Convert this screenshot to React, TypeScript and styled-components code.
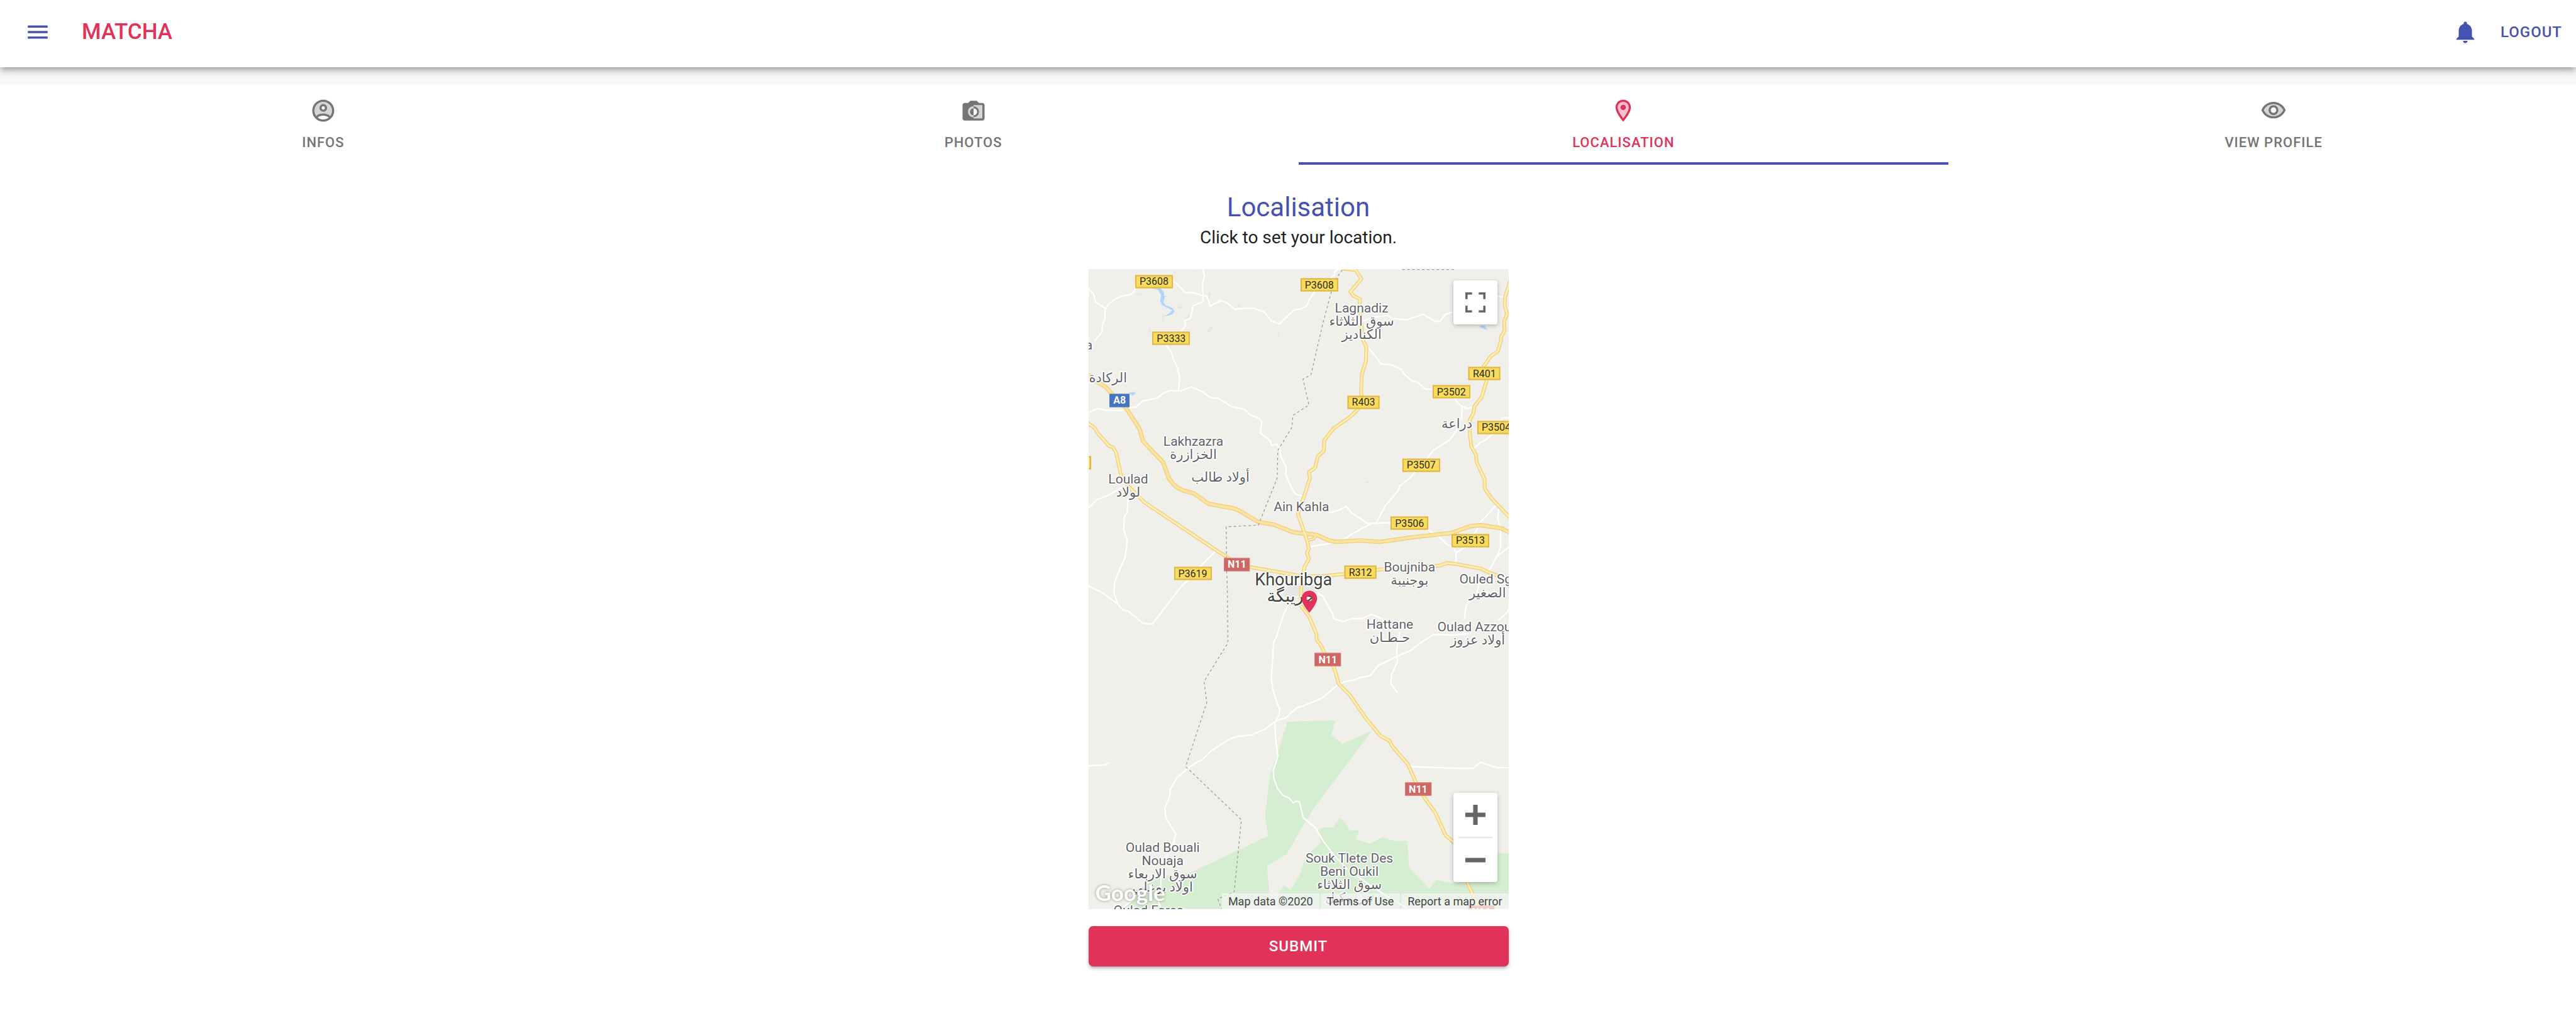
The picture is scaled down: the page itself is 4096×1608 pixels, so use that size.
import React from "react";
import styled, { createGlobalStyle } from "styled-components";
import { MdMenu, MdNotifications, MdPlace } from "react-icons/md";

const color = {
  primary: "#4552b1",
  secondary: "#e1325a",
  muted: "#757575",
  text: "#222222",
  page: "#f8f8f8",
  paper: "#ffffff",
};

const GlobalStyle = createGlobalStyle`
  *, *::before, *::after { box-sizing: border-box; }
  body {
    margin: 0;
    background: ${color.page};
    color: ${color.text};
    font-family: Roboto, "Noto Sans", "DejaVu Sans", sans-serif;
  }
  button { font-family: inherit; cursor: pointer; }
`;

const Page = styled.div`
  display: flex;
  flex-direction: column;
  min-height: 100vh;
  overflow-x: clip;
`;

const AppBar = styled.header`
  display: flex;
  align-items: flex-start;
  height: 107px;
  padding: 0 22px 0 39px;
  background: ${color.paper};
  box-shadow: 0 4px 7px -2px rgba(0, 0, 0, 0.2), 0 7px 9px rgba(0, 0, 0, 0.14),
    0 2px 18px rgba(0, 0, 0, 0.12);
`;

const BarButton = styled.button`
  display: flex;
  align-items: center;
  height: 101px;
  padding: 0;
  border: 0;
  background: none;
  color: ${color.primary};
  font-size: 24px;
  font-weight: 500;
  letter-spacing: 1px;
  text-transform: uppercase;
`;

const Brand = styled.h1`
  flex: 1;
  margin: 0 0 0 49px;
  color: ${color.secondary};
  font-size: 35px;
  font-weight: 500;
  line-height: 101px;
`;

const BarActions = styled.div`
  display: flex;
  gap: 35px;
`;

const Main = styled.main`
  flex: 1;
  margin: 28px -36px 0 -3px;
  background: ${color.paper};
  position: relative;
`;

const Tabs = styled.nav`
  display: flex;
`;

const Tab = styled.button<{ $active?: boolean }>`
  flex: 1;
  display: flex;
  flex-direction: column;
  align-items: center;
  gap: 16px;
  height: 127px;
  padding: 20px 0 0;
  border: 0;
  border-bottom: 4px solid ${(p) => (p.$active ? color.primary : "transparent")};
  background: none;
  color: ${(p) => (p.$active ? color.secondary : color.muted)};
  font-size: 22px;
  font-weight: 500;
  line-height: 28px;
  letter-spacing: 1px;
  text-transform: uppercase;
`;

const TabIcon = styled.svg`
  width: 42px;
  height: 42px;
  fill: currentColor;
`;

const Panel = styled.section`
  display: flex;
  flex-direction: column;
  align-items: center;
  padding: 43px 0 48px;
`;

const Title = styled.h2`
  margin: 0;
  color: ${color.primary};
  font-size: 42px;
  font-weight: 400;
  line-height: 50px;
`;

const Hint = styled.p`
  margin: 0;
  font-size: 28px;
  line-height: 46px;
`;

const MapFrame = styled.div`
  position: relative;
  width: 100%;
  max-width: 668px;
  aspect-ratio: 684 / 1042;
  margin: 27px 0;
  overflow: hidden;
  background: #f0efea;
`;

const MapDrawing = styled.svg`
  display: block;
  width: 100%;
  height: 100%;
`;

const Place = styled.div<{ $big?: boolean }>`
  position: absolute;
  transform: translateX(-50%);
  margin-top: ${(p) => (p.$big ? "-14px" : "-10px")};
  color: ${(p) => (p.$big ? "#424242" : "#5f6368")};
  font-size: ${(p) => (p.$big ? "27px" : "21px")};
  line-height: ${(p) => (p.$big ? "26px" : "21px")};
  text-align: center;
  white-space: pre;
  text-shadow: 2px 0 1px #fff, -2px 0 1px #fff, 0 2px 1px #fff, 0 -2px 1px #fff,
    1px 1px 1px #fff, -1px -1px 1px #fff, 1px -1px 1px #fff, -1px 1px 1px #fff;
`;

const shieldLook = {
  road: "border: 2px solid #dcb649; background: #fadb5a; color: #2b2b20; font-weight: 400;",
  national: "border: 1px solid #d58078; background: #cb6765; color: #fff; font-weight: 700;",
  motorway: "border: 1px solid #4c7ecb; background: #4674bf; color: #fff; font-weight: 700;",
};

const Shield = styled.span<{ $kind: keyof typeof shieldLook }>`
  position: absolute;
  display: flex;
  align-items: center;
  height: 21px;
  padding: 0 5px;
  transform: translate(-50%, -50%);
  font-size: 16px;
  line-height: 16px;
  ${(p) => shieldLook[p.$kind]}
`;

const Marker = styled(MdPlace)`
  position: absolute;
  width: 42px;
  height: 42px;
  transform: translateX(-50%);
  color: ${color.secondary};
`;

const MapControls = styled.div<{ $edge: "top" | "bottom" }>`
  position: absolute;
  right: 18px;
  ${(p) => (p.$edge === "top" ? "top: 18px;" : "bottom: 43px;")}
  display: flex;
  flex-direction: column;
  align-items: center;
  width: 70px;
  border-radius: 4px;
  background: #fff;
  box-shadow: 0 2px 7px rgba(0, 0, 0, 0.25);
`;

const MapButton = styled.button`
  display: flex;
  align-items: center;
  justify-content: center;
  width: 70px;
  height: 70px;
  padding: 0;
  border: 0;
  background: none;
`;

const ControlIcon = styled.svg`
  width: 32px;
  height: 32px;
  fill: #666;
`;

const ControlRule = styled.div`
  width: 54px;
  height: 2px;
  background: #e6e6e6;
`;

const GoogleMark = styled.span`
  position: absolute;
  left: 11px;
  bottom: 7px;
  color: #fff;
  font-family: Lato, "Open Sans", sans-serif;
  font-size: 35px;
  font-weight: 700;
  line-height: 40px;
  text-shadow: 0 0 4px rgba(0, 0, 0, 0.4);
`;

const Legal = styled.div`
  position: absolute;
  right: 0;
  bottom: 0;
  display: flex;
  gap: 2px;
  font-size: 18px;
  line-height: 25px;
`;

const LegalItem = styled.span`
  padding: 0 10px;
  background: rgba(245, 245, 245, 0.72);
  color: #444;
`;

const LegalLink = styled.a`
  padding: 0 10px;
  background: rgba(245, 245, 245, 0.72);
  color: #444;
  text-decoration: none;
`;

const Submit = styled.button`
  width: 100%;
  max-width: 668px;
  height: 64px;
  border: 0;
  border-radius: 7px;
  background: ${color.secondary};
  color: #fff;
  font-size: 24px;
  font-weight: 500;
  letter-spacing: 1px;
  text-transform: uppercase;
  box-shadow: 0 5px 2px -4px rgba(0, 0, 0, 0.2), 0 4px 4px rgba(0, 0, 0, 0.14),
    0 2px 9px rgba(0, 0, 0, 0.12);
`;

/* ---- map geometry ---- */

const MAP_W = 684;
const MAP_H = 1042;

const sheets = {
  nw: { x: -12, y: -8, sx: 3, sy: 3 },
  ne: { x: 338, y: -8, sx: 3, sy: 3 },
  sw: { x: -12, y: 502, sx: 3, sy: 2.45 },
  se: { x: 338, y: 502, sx: 3, sy: 2.45 },
  centre: { x: 238, y: 452, sx: 3, sy: 3 },
};

// "nw 10,20 30,40 se 5,6" -> SVG points in map units
const trace = (line: string): string => {
  let sheet = sheets.nw;
  const out: string[] = [];
  line.split(" ").forEach((token) => {
    if (token in sheets) {
      sheet = sheets[token as keyof typeof sheets];
      return;
    }
    const [px, py] = token.split(",").map(Number);
    out.push(`${(sheet.x + px / sheet.sx).toFixed(1)},${(sheet.y + py / sheet.sy).toFixed(1)}`);
  });
  return out.join(" ");
};

const parks = [
  "sw 1008,576 se 190,571 172,628 225,665 370,612 85,922 0,1037 sw 1005,1103 907,1153 918,1260 920,1322 200,1322 290,1240 400,1190 480,1190 540,1175 730,1103 913,1032 898,950 922,790 960,700",
  "sw 955,1322 960,1262 992,1228 1022,1250 1068,1185 se 45,1115 120,1058 105,1010 135,997 180,997 213,960 240,980 262,1010 308,1010 290,1045 360,1063 420,1037 480,1052 543,1052 550,1155 650,1243 685,1207 770,1222 800,1100 1040,1100 1040,1322",
  "se 735,1040 770,1075 770,1050",
];

const hills = [
  "nw 260,155 298,135 290,148",
  "nw 465,205 500,208 485,220",
  "nw 630,305 652,302 625,335 610,335",
  "nw 395,240 408,250 398,288",
  "nw 325,320 338,310 335,345",
  "nw 445,45 465,24 460,45",
  "nw 535,40 565,24 550,40",
  "nw 620,145 635,140 622,180",
  "nw 755,205 778,190 775,208",
  "nw 955,350 970,322 965,350",
  "nw 505,265 530,245 525,265",
  "ne 335,1070 345,1060 370,1075 350,1068",
  "centre 235,215 270,190 420,185 430,210 370,230 290,240 260,258 240,240",
];

const waters = [
  "nw 340,115 385,115 403,135 405,155 420,157 408,160 402,185 410,200 440,212 457,228 445,245 408,255 430,240 445,225 420,212 395,200 385,180 390,150 375,125",
  "nw 232,628 265,625 265,632 250,643",
  "ne 892,300 918,300 935,320 905,312",
];

const lanes = [
  "nw 36,122 60,145 70,185 117,215 115,270 102,300 102,330 65,375",
  "nw 117,220 135,195 165,170 200,155 240,150 262,130 265,100 280,98",
  "nw 445,80 470,100 510,140 540,137 590,152 615,158 630,205 680,178 710,188 750,220 800,215 840,215 895,235 930,280 970,290 1000,260 1035,228 ne 0,222 25,217 50,205 65,170 90,135",
  "ne 165,70 185,55 190,35 205,24",
  "nw 595,24 602,60 592,100 595,152 595,182 545,203 535,265 505,275 510,300 490,325",
  "nw 415,395 440,430 450,465 470,505 480,555 475,618",
  "nw 36,725 80,705 120,713 190,716 240,700 268,697 300,668 370,655 405,628 435,617 480,620 540,600 590,622 630,652 670,655 735,697 795,708 830,740 865,750 882,770 875,825 920,860 930,885 955,880 970,905 975,940 1000,990 1000,1030 1025,1090 1045,1120 ne 0,1125 35,1135",
  "nw 36,1190 75,1152 130,1130 190,1095 230,1085",
  "nw 228,1150 225,1210 210,1235 207,1300 225,1350 213,1435 180,1510 sw 162,20 160,65 180,108",
  "sw 36,35 105,62 180,108 205,130 230,135 300,182 345,188 490,35 520,12",
  "nw 655,1402 580,1478",
  "ne 320,280 370,260 445,250 470,265 540,272 580,258 620,245 680,280 700,280 730,245 770,232",
  "ne 345,400 375,435 415,488 460,490 510,512 530,540 565,570 590,575 630,610 680,612",
  "ne 775,655 790,680 810,695 835,705 865,700",
  "ne 810,695 808,755",
  "ne 785,810 750,857 670,910 640,948",
  "ne 580,1015 560,1040 505,1085 495,1110 435,1180 390,1265",
  "ne 165,1215 200,1205 245,1183 270,1215 350,1268 430,1263 470,1265",
  "ne 365,1268 265,1322 235,1345 150,1367 75,1378 60,1390",
  "ne 640,1297 690,1325 740,1372 770,1385 780,1410 780,1460",
  "ne 780,1410 830,1380",
  "ne 975,1180 900,1260 870,1320",
  "ne 990,1195 985,1240 998,1300 998,1380 985,1420 940,1500",
  "ne 985,1425 1040,1380",
  "ne 1040,750 1010,750 990,775",
  "ne 960,830 920,862 900,870 868,900",
  "ne 985,158 1015,160",
  "se 60,60 100,62 130,75 180,150 182,165 230,177 270,165 320,165 368,148 420,165",
  "se 0,523 35,513 130,480 205,427 245,415 285,410 310,400 360,393 400,352 493,315 560,292 600,265 670,228 760,230 840,225",
  "se 505,220 490,290 495,335 465,390 462,425 495,460",
  "se 893,25 880,70 830,110 823,160",
  "se 1040,120 1030,140 990,170",
  "se 555,755 780,762 865,762 900,737 980,760 1040,760",
  "sw 1010,110 990,145 965,205 955,235 940,258 935,320 928,400 935,445 950,485 970,530 965,550 945,580 950,650 960,715 938,770 940,800 960,845 985,870 1015,880 1035,900 se 0,893 15,895 35,960 95,1000 130,1050 185,1110 250,1165 380,1240 540,1320",
  "sw 1065,513 1025,540 1000,560 950,572 900,605 835,628 760,635 720,647 635,692 590,728 550,745 520,762 465,802 435,845 430,880 408,920 413,960 462,1025 450,1060 415,1115",
  "sw 36,752 118,748 133,740",
  "sw 390,1190 388,1240",
  "sw 378,1295 390,1322",
  "sw 200,1322 245,1290",
];

const highways = [
  { width: 7, line: "nw 30,540 60,565 120,600 160,645 220,705 285,805 302,865 330,895 400,968 430,1050 460,1085 495,1105 550,1120 620,1170 680,1182 740,1192 770,1203 865,1260 940,1272 1035,1310 ne 30,1315 100,1323 160,1350 195,1357 310,1350 410,1357 560,1335 760,1313 850,1280 900,1275 1000,1290 1045,1312" },
  { width: 6, line: "nw 30,775 65,800 80,825 135,887 155,895 170,920 195,1035 230,1085 310,1165 655,1395 725,1440 825,1480 ne 30,1525 140,1523 250,1512 390,1495 440,1487 700,1473 735,1460 780,1465 900,1487 950,1510 1045,1545" },
  { width: 6, line: "ne 230,22 290,28 318,72 265,135 280,155 312,170 310,200 318,290 325,370 343,405 340,475 320,540 317,630 325,670 300,710 265,745 180,805 137,860 135,912 105,940 92,995 62,1015 67,1045 40,1130 8,1220 50,1340 62,1390 52,1410 62,1440 40,1480 se 25,40 20,110 65,160 98,225 100,250 120,270 155,330 185,360 208,425 260,468 345,568 370,592 410,632 455,652 470,675 545,745 598,844 640,895 680,940 730,1030 790,1070 835,1215 880,1300 900,1335" },
  { width: 6, line: "ne 1045,80 1020,160 1018,200 1030,245 1015,280 1018,325 1000,355 1000,375 985,425 950,450 915,500 930,570 905,650 870,695 865,730 848,760 848,830 855,890 878,930 880,965 920,1050 920,1095 955,1145 1045,1240" },
  { width: 5, line: "ne 55,1350 85,1342 95,1328" },
];

const borders = [
  "ne 225,28 195,70 170,140 130,290 72,540 33,562 62,688 0,728 nw 1033,740 1030,795 960,910 957,1045 865,1275 708,1283 710,1500 sw 713,30 716,262 600,415 613,500 510,755 782,967 747,1255 667,1283 685,1322",
  "ne 518,26 780,26",
];

type ShieldKind = keyof typeof shieldLook;
const shields: [string, number, number, ShieldKind][] = [
  ["P3608", 107, 20, "road"],
  ["P3333", 135, 113, "road"],
  ["A8", 51, 214, "motorway"],
  ["P3610", -26, 315, "road"],
  ["N11", 242, 481, "national"],
  ["P3619", 170, 496, "road"],
  ["P3608", 376, 26, "road"],
  ["R403", 448, 217, "road"],
  ["R401", 645, 170, "road"],
  ["P3502", 591, 200, "road"],
  ["P3504", 664, 258, "road"],
  ["P3507", 542, 319, "road"],
  ["P3506", 523, 414, "road"],
  ["P3513", 622, 442, "road"],
  ["R312", 443, 494, "road"],
  ["N11", 390, 636, "national"],
  ["N11", 537, 847, "national"],
  ["N11", 640, 1047, "national"],
];

const places: { text: string; x: number; y: number; big?: boolean }[] = [
  { text: "a", x: 1, y: 124 },
  { text: "الركادة", x: 32, y: 177 },
  { text: "Lakhzazra\nالخزازرة", x: 171, y: 281 },
  { text: "أولاد طالب", x: 215, y: 339 },
  { text: "Loulad\nلولاد", x: 65, y: 342 },
  { text: "Ain Kahla", x: 347, y: 387 },
  { text: "Lagnadiz\nسوق الثلاثاء\nالكناديز", x: 445, y: 63 },
  { text: "دراعة", x: 600, y: 252 },
  { text: "Boujniba\nبوجنيبة", x: 523, y: 485 },
  { text: "Ouled Sghir", x: 659, y: 505 },
  { text: "الصغير", x: 650, y: 527 },
  { text: "Hattane\nحـطـان", x: 491, y: 579 },
  { text: "Oulad Azzouz\nأولاد عزوز", x: 634, y: 583 },
  { text: "Oulad Bouali\nNouaja\nسوق الاربعاء\nاولاد بوعلي", x: 121, y: 942 },
  { text: "Oulad Fares", x: 98, y: 1044 },
  { text: "Souk Tlete Des\nBeni Oukil\nسوق الثلاثاء\nبني وكيل", x: 425, y: 959 },
  { text: "Khouribga", x: 334, y: 507, big: true },
  { text: "خريبگة", x: 330, y: 533, big: true },
];

const at = (x: number, y: number) => ({
  left: `${(x / MAP_W) * 100}%`,
  top: `${(y / MAP_H) * 100}%`,
});

const LocationMap = () => (
  <MapFrame aria-label="Map of Khouribga">
    <MapDrawing viewBox={`0 0 ${MAP_W} ${MAP_H}`} preserveAspectRatio="none" aria-hidden="true">
      {parks.map((p) => <polygon key={p} points={trace(p)} fill="#d5edd1" />)}
      {hills.map((p) => <polygon key={p} points={trace(p)} fill="#e7e6e2" />)}
      {waters.map((p) => <polygon key={p} points={trace(p)} fill="#b0d5fb" />)}
      <g fill="none" strokeLinejoin="round" strokeLinecap="round">
        {lanes.map((p) => <polyline key={p} points={trace(p)} stroke="#fff" strokeWidth="2.4" />)}
      </g>
      <g fill="none" strokeLinejoin="round">
        {highways.map((h) => (
          <polyline key={h.line} points={trace(h.line)} stroke="#efcf7c" strokeWidth={h.width} />
        ))}
        {highways.map((h) => (
          <polyline
            key={h.line}
            points={trace(h.line)}
            stroke={h.width > 6 ? "#fbe3a0" : "#fdeeb0"}
            strokeWidth={h.width - 2.8}
          />
        ))}
        {borders.map((p) => (
          <polyline key={p} points={trace(p)} stroke="#9b9b9b" strokeWidth="1.3" strokeDasharray="4 4" />
        ))}
      </g>
    </MapDrawing>
    {shields.map(([name, x, y, kind]) => (
      <Shield key={`${name}-${x}`} $kind={kind} style={at(x, y)}>{name}</Shield>
    ))}
    {places.map((p) => (
      <Place key={`${p.text}-${p.x}`} $big={p.big} style={at(p.x, p.y)}>{p.text}</Place>
    ))}
    <Marker style={at(360, 520)} aria-label="Your location" />
    <MapControls $edge="top">
      <MapButton type="button" aria-label="Toggle fullscreen view">
        <ControlIcon viewBox="0 0 18 18">
          <path d="M0 0v6h2V2h4V0H0zm16 0h-4v2h4v4h2V0h-2zm0 16h-4v2h6v-6h-2v4zM2 12H0v6h6v-2H2v-4z" />
        </ControlIcon>
      </MapButton>
    </MapControls>
    <MapControls $edge="bottom">
      <MapButton type="button" aria-label="Zoom in">
        <ControlIcon viewBox="0 0 18 18">
          <path d="M18 7h-7V0H7v7H0v4h7v7h4v-7h7z" />
        </ControlIcon>
      </MapButton>
      <ControlRule />
      <MapButton type="button" aria-label="Zoom out">
        <ControlIcon viewBox="0 0 18 18">
          <path d="M0 7h18v4H0z" />
        </ControlIcon>
      </MapButton>
    </MapControls>
    <GoogleMark>Google</GoogleMark>
    <Legal>
      <LegalItem>Map data ©2020</LegalItem>
      <LegalLink href="#terms">Terms of Use</LegalLink>
      <LegalLink href="#report">Report a map error</LegalLink>
    </Legal>
  </MapFrame>
);

const tabs = [
  {
    label: "Infos",
    soft: "M12 4c-4.41 0-8 3.59-8 8 0 1.82.62 3.49 1.64 4.83 1.43-1.74 4.9-2.33 6.36-2.33s4.93.59 6.36 2.33C19.38 15.49 20 13.82 20 12c0-4.41-3.59-8-8-8zm0 9c-1.94 0-3.5-1.56-3.5-3.5S10.06 6 12 6s3.5 1.56 3.5 3.5S13.94 13 12 13z",
    line: "M12 2C6.48 2 2 6.48 2 12s4.48 10 10 10 10-4.48 10-10S17.52 2 12 2zM7.07 18.28c.43-.9 3.05-1.78 4.93-1.78s4.51.88 4.93 1.78C15.57 19.36 13.86 20 12 20s-3.57-.64-4.93-1.72zm11.29-1.45c-1.43-1.74-4.9-2.33-6.36-2.33s-4.93.59-6.36 2.33C4.62 15.49 4 13.82 4 12c0-4.41 3.59-8 8-8s8 3.59 8 8c0 1.82-.62 3.49-1.64 4.83zM12 6c-1.94 0-3.5 1.56-3.5 3.5S10.06 13 12 13s3.5-1.56 3.5-3.5S13.94 6 12 6zm0 5c-.83 0-1.5-.67-1.5-1.5S11.17 8 12 8s1.5.67 1.5 1.5S12.83 11 12 11z",
  },
  {
    label: "Photos",
    soft: "M20 7h-8v1c2.8 0 5 2.2 5 5s-2.2 5-5 5v1h8V7zM8.8 13c0-1.8 1.4-3.2 3.2-3.2V8c-2.8 0-5 2.2-5 5s2.2 5 5 5v-1.8c-1.8 0-3.2-1.4-3.2-3.2z",
    line: "M20 5h-3.2L15 3H9L7.2 5H4c-1.1 0-2 .9-2 2v12c0 1.1.9 2 2 2h16c1.1 0 2-.9 2-2V7c0-1.1-.9-2-2-2zm0 14h-8v-1c-2.8 0-5-2.2-5-5s2.2-5 5-5V7h8v12zm-3-6c0-2.8-2.2-5-5-5v1.8c1.8 0 3.2 1.4 3.2 3.2s-1.4 3.2-3.2 3.2V18c2.8 0 5-2.2 5-5zm-8.2 0c0 1.8 1.4 3.2 3.2 3.2V9.8c-1.8 0-3.2 1.4-3.2 3.2z",
  },
  {
    label: "Localisation",
    active: true,
    soft: "M12 4C9.24 4 7 6.24 7 9c0 2.85 2.92 7.21 5 9.88 2.11-2.69 5-7 5-9.88 0-2.76-2.24-5-5-5zm0 7.5c-1.38 0-2.5-1.12-2.5-2.5s1.12-2.5 2.5-2.5 2.5 1.12 2.5 2.5-1.12 2.5-2.5 2.5z",
    line: "M12 2C8.13 2 5 5.13 5 9c0 5.25 7 13 7 13s7-7.75 7-13c0-3.87-3.13-7-7-7zM7 9c0-2.76 2.24-5 5-5s5 2.24 5 5c0 2.88-2.88 7.19-5 9.88C9.92 16.21 7 11.85 7 9zm5-2.5a2.5 2.5 0 1 1 0 5 2.5 2.5 0 0 1 0-5z",
  },
  {
    label: "View profile",
    soft: "M12 6c-3.79 0-7.17 2.13-8.82 5.5C4.83 14.87 8.21 17 12 17s7.17-2.13 8.82-5.5C19.17 8.13 15.79 6 12 6zm0 10c-2.48 0-4.5-2.02-4.5-4.5S9.52 7 12 7s4.5 2.02 4.5 4.5S14.48 16 12 16z",
    line: "M12 4C7 4 2.73 7.11 1 11.5 2.73 15.89 7 19 12 19s9.27-3.11 11-7.5C21.27 7.11 17 4 12 4zm0 13c-3.79 0-7.17-2.13-8.82-5.5C4.83 8.13 8.21 6 12 6s7.17 2.13 8.82 5.5C19.17 14.87 15.79 17 12 17zm0-10c-2.48 0-4.5 2.02-4.5 4.5S9.52 16 12 16s4.5-2.02 4.5-4.5S14.48 7 12 7zm0 7c-1.38 0-2.5-1.12-2.5-2.5S10.62 9 12 9s2.5 1.12 2.5 2.5S13.38 14 12 14z",
  },
];

export default function App() {
  return (
    <Page>
      <GlobalStyle />
      <AppBar>
        <BarButton type="button" aria-label="Open menu"><MdMenu size={42} /></BarButton>
        <Brand>MATCHA</Brand>
        <BarActions>
          <BarButton type="button" aria-label="Notifications"><MdNotifications size={42} /></BarButton>
          <BarButton type="button">Logout</BarButton>
        </BarActions>
      </AppBar>
      <Main>
        <Tabs aria-label="Profile sections">
          {tabs.map((t) => (
            <Tab key={t.label} type="button" $active={t.active} aria-current={t.active ? "page" : undefined}>
              <TabIcon viewBox="0 0 24 24" aria-hidden="true">
                <path opacity=".3" d={t.soft} />
                <path d={t.line} />
              </TabIcon>
              {t.label}
            </Tab>
          ))}
        </Tabs>
        <Panel>
          <Title>Localisation</Title>
          <Hint>Click to set your location.</Hint>
          <LocationMap />
          <Submit type="submit">Submit</Submit>
        </Panel>
      </Main>
    </Page>
  );
}
